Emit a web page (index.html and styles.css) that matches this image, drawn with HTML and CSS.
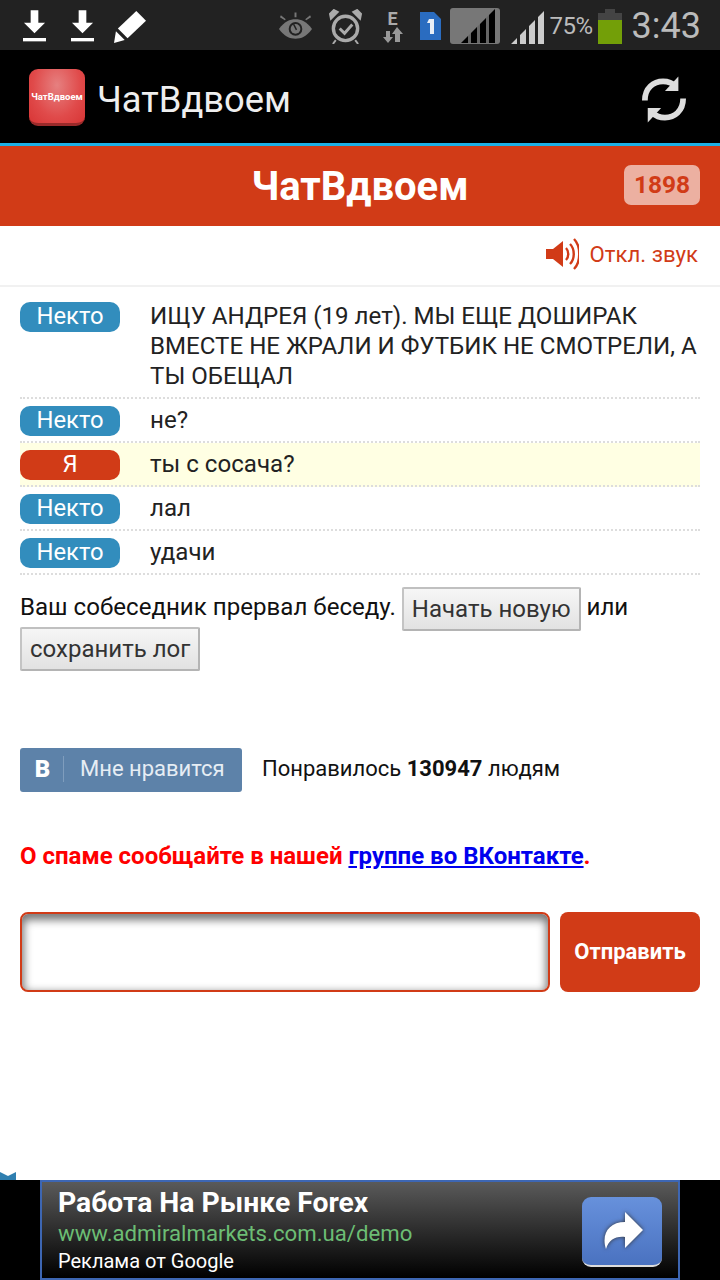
FILE: index.html
```html
<!DOCTYPE html>
<html lang="en">
<head>
  <meta charset="UTF-8" />
  <title>ЧатВдвоем</title>
  <link rel="stylesheet" href="styles.css">
</head>
<body>
  <div class="status-bar">
    <div class="status-left">
      <svg class="ic-dl" viewBox="0 0 24 34"><path d="M8 0h8v13h7L12 24 1 13h7z" fill="#fff"/><rect x="0" y="29" width="24" height="3.5" fill="#fff"/></svg>
      <svg class="ic-dl" viewBox="0 0 24 34"><path d="M8 0h8v13h7L12 24 1 13h7z" fill="#fff"/><rect x="0" y="29" width="24" height="3.5" fill="#fff"/></svg>
      <svg class="ic-pen" viewBox="0 0 34 34"><path d="M23 1l10 10-19 18L4 19z" fill="#fff"/><path d="M2 22l9 9-11 3z" fill="#fff"/></svg>
    </div>
    <div class="status-right">
      <svg class="ic-eye" viewBox="0 0 36 30"><path d="M1 18C7 10 12 8 18 8s11 2 17 10c-6 8-11 10-17 10S7 26 1 18z" fill="#777"/><circle cx="18" cy="18" r="7" fill="#222"/><circle cx="18" cy="18" r="5" fill="#777"/><path d="M17 1h2v5h-2zM3 4l5 4-1 1-5-3zM33 4l-5 4 1 1 5-3z" fill="#777"/><path d="M16 13l3 6" stroke="#222" stroke-width="1.5"/></svg>
      <svg class="ic-alarm" viewBox="0 0 34 36"><circle cx="17" cy="20" r="12.5" fill="none" stroke="#aaa" stroke-width="3.5"/><path d="M11 20l5 5 8-9" fill="none" stroke="#aaa" stroke-width="3"/><path d="M2 10L9 3 5 1 1 5zM32 10l-7-7 4-2 4 4zM7 32l-3 4M27 32l3 4" fill="#aaa" stroke="#aaa" stroke-width="2"/></svg>
      <div class="net-e">
        <span class="net-letter">E</span>
        <svg class="ic-updown" viewBox="0 0 21 16"><path d="M4 4h4v6h3l-5 6-5-6h3z" fill="#999"/><path d="M15 0l6 7h-3v8h-5V7h-3z" fill="#999"/></svg>
      </div>
      <svg class="ic-sim" viewBox="0 0 22 28"><path d="M1 0h14l7 7v21H1z" fill="#2a6cc0"/><path d="M10 7h5v15h-4V11H8z" fill="#e8eef6"/></svg>
      <div class="sig-box">
        <svg viewBox="0 0 50 36"><rect width="50" height="36" rx="3" fill="#777"/><path d="M11 35L44 2v33z" fill="#666"/><path d="M11 35l7-7v7zM21 35V25l6-6v16zM30 35V16l6-6v25zM39 35V7l6-6v34z" fill="#000"/></svg>
      </div>
      <svg class="ic-bars" viewBox="0 0 33 33"><path d="M0 33l6-6v6zM9 33V24l6-6v15zM18 33V15l6-6v24zM27 33V6l6-6v33z" fill="#ccc"/></svg>
      <span class="batt-text">75%</span>
      <div class="battery"><div class="batt-cap"></div><div class="batt-body"><div class="batt-fill"></div></div></div>
      <span class="clock">3:43</span>
    </div>
  </div>

  <div class="action-bar">
    <div class="app-logo"><span>ЧатВдвоем</span></div>
    <div class="app-title">ЧатВдвоем</div>
    <svg class="ic-refresh" viewBox="0 0 46 48"><path d="M3 25C3 12 12 5 22 5c6 0 10 2 13 5" fill="none" stroke="#ddd" stroke-width="6"/><path d="M38 0v15H24z" fill="#ddd"/><path d="M43 23c0 13-9 20-19 20-6 0-10-2-13-5" fill="none" stroke="#ddd" stroke-width="6"/><path d="M6 48V33h14z" fill="#ddd"/></svg>
  </div>

  <header class="chat-header">
    <h1>ЧатВдвоем</h1>
    <span class="online-count">1898</span>
  </header>

  <div class="sound-row">
    <svg class="ic-sound" viewBox="0 0 33 32"><path d="M0 11h7l10-8v26L7 21H0z" fill="#d13b17"/><path d="M20 10c3 3 3 9 0 12M24 6c5 5 5 15 0 20M28 1c7 7 7 23 0 30" fill="none" stroke="#d13b17" stroke-width="2.4"/></svg>
    <span>Откл. звук</span>
  </div>

  <main class="chat">
    <div class="msg">
      <span class="who who-other">Некто</span>
      <p>ИЩУ АНДРЕЯ (19 лет). МЫ ЕЩЕ ДОШИРАК ВМЕСТЕ НЕ ЖРАЛИ И ФУТБИК НЕ СМОТРЕЛИ, А ТЫ ОБЕЩАЛ</p>
    </div>
    <div class="msg">
      <span class="who who-other">Некто</span>
      <p>не?</p>
    </div>
    <div class="msg msg-mine">
      <span class="who who-me">Я</span>
      <p>ты с сосача?</p>
    </div>
    <div class="msg">
      <span class="who who-other">Некто</span>
      <p>лал</p>
    </div>
    <div class="msg">
      <span class="who who-other">Некто</span>
      <p>удачи</p>
    </div>

    <div class="ended">
      Ваш собеседник прервал беседу. <button class="old-btn">Начать новую</button> или <button class="old-btn">сохранить лог</button>
    </div>

    <div class="like-row">
      <div class="vk-btn"><span class="vk-b">В</span><span class="vk-text">Мне нравится</span></div>
      <div class="like-count">Понравилось <b>130947</b> людям</div>
    </div>

    <div class="spam">О спаме сообщайте в нашей <a href="#">группе во ВКонтакте</a>.</div>

    <div class="send-row">
      <div class="msg-input"></div>
      <button class="send-btn">Отправить</button>
    </div>
  </main>

  <svg class="ad-corner" viewBox="0 0 17 8"><path d="M0 0l8 4 8-4v8H0z" fill="#2f7fb0"/></svg>
  <div class="ad-strip">
    <div class="ad">
      <div class="ad-text">
        <div class="ad-title">Работа На Рынке Forex</div>
        <div class="ad-url">www.admiralmarkets.com.ua/demo</div>
        <div class="ad-by">Реклама от Google</div>
      </div>
      <div class="ad-go">
        <svg viewBox="0 0 42 38"><path d="M24 0l18 18-18 18V25C14 24 8 28 5 37 0 22 8 10 24 10z" fill="#fff"/></svg>
      </div>
    </div>
  </div>
</body>
</html>
```
FILE: styles.css
```css
* {
  box-sizing: border-box;
}

html, body {
  margin: 0;
  padding: 0;
}

body {
  width: 720px;
  height: 1280px;
  display: flex;
  flex-direction: column;
  overflow: hidden;
  background: #fff;
  font-family: Roboto, "Noto Sans", sans-serif;
  color: #111;
}

/* status bar */
.status-bar {
  height: 50px;
  background: #222;
  display: flex;
  justify-content: space-between;
  align-items: center;
  flex-shrink: 0;
}

.status-left {
  display: flex;
  align-items: flex-start;
  padding-left: 23px;
  height: 50px;
  padding-top: 10px;
}

.ic-dl {
  width: 23px;
  height: 33px;
  margin-right: 25px;
}

.ic-pen {
  width: 33px;
  height: 33px;
  margin-left: -5px;
}

.status-right {
  display: flex;
  align-items: center;
  height: 50px;
  padding: 2px 19px 0 0;
}

.ic-eye {
  width: 35px;
  height: 30px;
  margin-right: 16px;
}

.ic-alarm {
  width: 33px;
  height: 35px;
  margin-right: 20px;
}

.net-e {
  width: 22px;
  display: flex;
  flex-direction: column;
  align-items: center;
  margin-right: 15px;
}

.net-letter {
  font-size: 18px;
  font-weight: 700;
  line-height: 17px;
  color: #aaa;
}

.ic-updown {
  width: 21px;
  height: 16px;
}

.ic-sim {
  width: 22px;
  height: 28px;
  margin-right: 9px;
}

.sig-box {
  width: 50px;
  height: 36px;
  margin-right: 11px;
}

.sig-box svg {
  display: block;
  width: 50px;
  height: 36px;
}

.ic-bars {
  width: 33px;
  height: 33px;
  margin-right: 6px;
  align-self: flex-end;
  margin-bottom: 6px;
}

.batt-text {
  font-size: 24px;
  color: #bbb;
  margin-right: 5px;
  letter-spacing: -0.5px;
}

.battery {
  width: 24px;
  height: 35px;
  display: flex;
  flex-direction: column;
  align-items: center;
  margin-right: 10px;
}

.batt-cap {
  width: 10px;
  height: 4px;
  background: #444;
}

.batt-body {
  width: 24px;
  height: 31px;
  background: #444;
  display: flex;
  align-items: flex-end;
}

.batt-fill {
  width: 100%;
  height: 24px;
  background: #739f08;
}

.clock {
  font-size: 36px;
  color: #bbb;
}

/* action bar */
.action-bar {
  height: 93px;
  background: #000;
  display: flex;
  align-items: center;
  padding: 2px 0 0 29px;
  flex-shrink: 0;
}

.app-logo {
  width: 56px;
  height: 57px;
  border-radius: 9px;
  background: radial-gradient(ellipse at 50% 30%, #e68080, #e04a4a 60%, #d83535);
  border-bottom: 3px solid #9a2a2a;
  display: flex;
  align-items: center;
  justify-content: center;
}

.app-logo span {
  font-size: 9.5px;
  font-weight: 700;
  color: #fff;
  white-space: nowrap;
}

.app-title {
  font-size: 36.3px;
  color: #eee;
  margin-left: 12px;
  padding-top: 4px;
}

.ic-refresh {
  width: 44px;
  height: 47px;
  margin-left: auto;
  margin-right: 34px;
  margin-top: 4px;
}

/* red header */
.chat-header {
  height: 83px;
  border-top: 3px solid #1cb0e6;
  background: #d13b17;
  display: flex;
  align-items: center;
  justify-content: center;
  position: relative;
  flex-shrink: 0;
}

.chat-header h1 {
  margin: 0;
  font-size: 40px;
  font-weight: 700;
  color: #fff;
}

.online-count {
  position: absolute;
  right: 20px;
  top: 19px;
  width: 76px;
  height: 40px;
  border-radius: 7px;
  background: #ecb0a1;
  color: #d13b17;
  font-size: 24.5px;
  font-weight: 700;
  line-height: 40px;
  text-align: center;
}

.sound-row {
  height: 61px;
  border-bottom: 2px solid #f1f1f1;
  display: flex;
  justify-content: flex-end;
  align-items: center;
  padding: 0 22px 3px 0;
  color: #d13b17;
  font-size: 22.2px;
  flex-shrink: 0;
}

.ic-sound {
  width: 33px;
  height: 32px;
  margin-right: 11px;
}

/* chat */
.chat {
  padding: 8px 20px 0;
  flex-grow: 1;
}

.msg {
  display: flex;
  align-items: flex-start;
  padding: 7px 0 5px;
  border-bottom: 2px dotted #ddd;
  font-size: 24.1px;
  line-height: 30px;
}

.msg-mine {
  background: #ffffe3;
}

.msg p {
  margin: -1px 0 1px;
  flex: 1;
  color: #222;
}

.who {
  width: 100px;
  height: 30px;
  border-radius: 10px;
  margin-right: 30px;
  color: #fff;
  font-size: 23.8px;
  line-height: 28px;
  text-align: center;
  flex-shrink: 0;
}

.who-other {
  background: #328dbd;
}

.who-me {
  background: #d13b17;
}

.ended {
  margin-top: 13px;
  font-size: 24.1px;
  line-height: 39px;
  color: #111;
}

.old-btn {
  height: 44px;
  margin: -2px 0 -3px;
  padding: 0 8px;
  font-family: inherit;
  font-size: 24px;
  color: #333;
  background: linear-gradient(#f6f6f6, #e2e2e2);
  border: 2px solid #b4b4b4;
  border-top-color: #c0c0c0;
  border-left-color: #c4c4c4;
  border-radius: 2px;
  vertical-align: middle;
}

.like-row {
  margin-top: 80px;
  display: flex;
  align-items: center;
}

.vk-btn {
  width: 222px;
  height: 44px;
  border-radius: 3px;
  background: #5d82a9;
  display: flex;
  align-items: center;
  padding-bottom: 3px;
  color: #fff;
}

.vk-b {
  width: 44px;
  height: 26px;
  border-right: 1px solid #7f9dbd;
  padding-left: 2px;
  font-size: 24px;
  font-weight: 900;
  line-height: 26px;
  text-align: center;
}

.vk-text {
  margin-left: 16px;
  font-size: 22px;
  color: #e6edf4;
}

.like-count {
  margin-left: 20px;
  padding-bottom: 3px;
  font-size: 22px;
}

.spam {
  margin-top: 50px;
  font-size: 24px;
  font-weight: 700;
  color: #f00;
}

.spam a {
  color: #00e;
}

.send-row {
  margin-top: 42px;
  display: flex;
  gap: 10px;
}

.msg-input {
  width: 530px;
  height: 80px;
  border: 2px solid #d13b17;
  border-radius: 8px;
  background: #fff;
  box-shadow: inset 0 4px 8px 2px #777;
}

.send-btn {
  width: 140px;
  height: 80px;
  border: 0;
  border-radius: 8px;
  padding-bottom: 3px;
  background: #d13b17;
  color: #fff;
  font-family: inherit;
  font-size: 22px;
  font-weight: 700;
}

/* ad */
.ad-corner {
  display: block;
  width: 17px;
  height: 8px;
  flex-shrink: 0;
}

.ad-strip {
  height: 100px;
  background: #000;
  display: flex;
  justify-content: center;
  flex-shrink: 0;
}

.ad {
  width: 640px;
  height: 100px;
  border: 2px solid #3d66b3;
  background: linear-gradient(#5a5a5a, #000);
  display: flex;
  justify-content: space-between;
  padding-left: 16px;
}

.ad-title {
  margin-top: 5px;
  font-size: 28.3px;
  font-weight: 700;
  line-height: 32px;
  color: #fff;
}

.ad-url {
  font-size: 22.2px;
  line-height: 28px;
  color: #6cbd74;
}

.ad-by {
  font-size: 20px;
  line-height: 29px;
  color: #fff;
}

.ad-go {
  width: 80px;
  height: 70px;
  margin: 15px 16px 0 0;
  border-radius: 9px;
  border-bottom: 2px solid #ddd;
  background: linear-gradient(#6791dc, #4a72c0);
  display: flex;
  align-items: center;
  justify-content: center;
}

.ad-go svg {
  width: 42px;
  height: 38px;
  filter: drop-shadow(0 0 2px #333);
}
```
